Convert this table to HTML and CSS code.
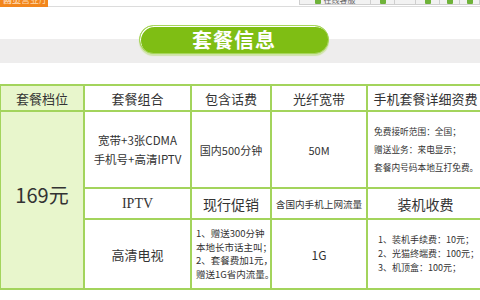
FILE: index.html
```html
<!DOCTYPE html>
<html lang="zh-CN">
<head>
<meta charset="utf-8">
<title>套餐信息</title>
<link rel="stylesheet" href="styles.css">
</head>
<body>
<div class="topbar">
  <div class="brand"><span>网上营业厅首页</span></div>
  <div class="tools">
    <span class="tool t1"><i class="ico"></i>在线客服</span>
    <span class="tool t2"><i class="ico"></i></span>
    <span class="tool t3"></span>
    <span class="tool t4"><i class="ico"></i></span>
    <span class="tool t5"><i class="ico"></i></span>
    <span class="tool t6"><i class="ico"></i></span>
  </div>
</div>

<div class="titleband">
  <div class="pill">套餐信息</div>
</div>

<table class="plan">
  <colgroup>
    <col class="c1"><col class="c2"><col class="c3"><col class="c4"><col class="c5">
  </colgroup>
  <tr class="r1">
    <th class="tier">套餐档位</th>
    <th>套餐组合</th>
    <th>包含话费</th>
    <th>光纤宽带</th>
    <th>手机套餐详细资费</th>
  </tr>
  <tr class="r2">
    <td class="tier price" rowspan="3"><span>169元</span></td>
    <td class="combo">宽带+3张CDMA<br>手机号+高清IPTV</td>
    <td class="small">国内500分钟</td>
    <td class="small">50M</td>
    <td class="detail">免费接听范围：全国；<br>赠送业务：来电显示；<br>套餐内号码本地互打免费。</td>
  </tr>
  <tr class="r3">
    <th class="serif">IPTV</th>
    <th>现行促销</th>
    <th class="narrow">含国内手机上网流量</th>
    <th>装机收费</th>
  </tr>
  <tr class="r4">
    <td class="tv">高清电视</td>
    <td class="promo">1、赠送300分钟<br>本地长市话主叫；<br>2、套餐费加1元，<br>赠送1G省内流量。</td>
    <td class="flow">1G</td>
    <td class="install">1、装机手续费：10元；<br>2、光猫终端费：100元；<br>3、机顶盒：100元；</td>
  </tr>
</table>
</body>
</html>
```
FILE: styles.css
```css
html, body {
  margin: 0;
  padding: 0;
  width: 480px;
  height: 300px;
  overflow: hidden;
  background: #ffffff;
  font-family: "Noto Sans CJK SC", "Noto Sans", sans-serif;
  color: #333333;
}

.topbar {
  display: flex;
  height: 6px;
  border-bottom: 1px solid #dcdcdc;
}

.brand {
  width: 55px;
  height: 7px;
  background: #f2861c;
  overflow: hidden;
  color: #ffd9b0;
  font-size: 9px;
  line-height: 0px;
  padding-left: 3px;
  box-sizing: border-box;
}

.tools {
  display: flex;
  margin-left: 251px;
  height: 6px;
}

.tool {
  display: flex;
  align-items: flex-start;
  justify-content: center;
  gap: 3px;
  height: 5px;
  background: #f2f2f2;
  border: 1px solid #cfcfcf;
  border-top: none;
  box-sizing: border-box;
  font-size: 8px;
  line-height: 0;
  color: #666;
  overflow: hidden;
}

.tool + .tool { border-left: none; }

.t1 { width: 72px; }
.t2 { width: 24px; }
.t3 { width: 21px; }
.t4 { width: 24px; }
.t5 { width: 20px; }
.t6 { width: 20px; }

.ico {
  display: block;
  width: 6px;
  height: 4px;
  background: #6fb33a;
  border-radius: 0 0 1px 1px;
}

.titleband {
  margin-top: 18px;
  height: 38px;
  background: linear-gradient(to bottom, transparent 14px, #eeeded 14px);
}

.pill {
  margin-left: 139px;
  width: 190px;
  height: 29px;
  box-sizing: border-box;
  border-radius: 15px;
  background: #7fbe14;
  border: 1px solid #a6d65a;
  box-shadow: 0 2px 1px #cfe3a8, 1px 1px 0 #ffffff inset;
  color: #ffffff;
  font-size: 20px;
  font-weight: bold;
  line-height: 27px;
  text-align: center;
  letter-spacing: 1px;
}

.plan {
  margin-top: 21px;
  margin-left: -1px;
  width: 484px;
  border-collapse: collapse;
  table-layout: fixed;
}

.c1 { width: 84px; }
.c2 { width: 107px; }
.c3 { width: 80px; }
.c4 { width: 96px; }
.c5 { width: 117px; }

.plan th, .plan td {
  border: 2px solid #a3d45c;
  padding: 0;
  text-align: center;
  vertical-align: middle;
  color: #333333;
}

.plan th {
  font-size: 13px;
  font-weight: normal;
}

.r1 { height: 26px; }
.r2 { height: 77px; }
.r3 { height: 31px; }
.r4 { height: 70px; }

.tier { background: #e8f6cc; }

.price {
  font-size: 20px;
  padding-bottom: 12px !important;
}

.combo {
  font-size: 11.5px;
  line-height: 19px;
}

.small {
  font-size: 11px;
}

.detail {
  text-align: left !important;
  padding-left: 6px !important;
  font-size: 8.7px;
  line-height: 18px;
  white-space: nowrap;
}

.serif {
  font-family: "Liberation Serif", "Noto Sans CJK SC", serif;
  font-size: 14px !important;
}

.r3 th { font-size: 14px; }

.narrow {
  font-size: 9.6px !important;
  white-space: nowrap;
}

.tv { font-size: 13px; }

.promo {
  text-align: left !important;
  padding-left: 4px !important;
  font-size: 9.5px;
  line-height: 13.5px;
  white-space: nowrap;
}

.flow { font-size: 12px; }

.install {
  text-align: left !important;
  padding-left: 10px !important;
  font-size: 9px;
  line-height: 14px;
  white-space: nowrap;
}
```
